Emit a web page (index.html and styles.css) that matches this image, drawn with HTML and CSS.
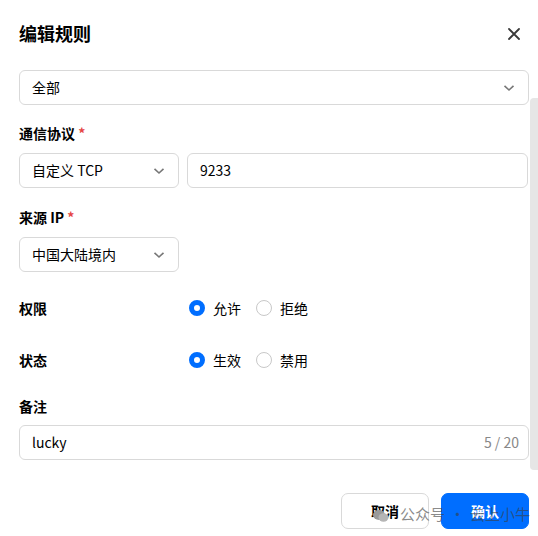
FILE: index.html
```html
<!DOCTYPE html>
<html lang="zh">
<head>
<meta charset="utf-8">
<link rel="stylesheet" href="styles.css">
</head>
<body>
<div class="modal">
  <div class="header">
    <div class="title">编辑规则</div>
    <svg class="close" width="14" height="14" viewBox="0 0 14 14"><path d="M2 2L12 12M12 2L2 12" stroke="#3a3a3a" stroke-width="1.8" stroke-linecap="round"/></svg>
  </div>
  <div class="body">
    <div class="select full first">
      <span>全部</span>
      <svg class="chev" width="12" height="8" viewBox="0 0 12 8"><path d="M1.5 1.8L6 6L10.5 1.8" fill="none" stroke="#777" stroke-width="1.6"/></svg>
    </div>

    <div class="label l-proto">通信协议 <i>*</i></div>
    <div class="row">
      <div class="select small">
        <span>自定义 TCP</span>
        <svg class="chev" width="12" height="8" viewBox="0 0 12 8"><path d="M1.5 1.8L6 6L10.5 1.8" fill="none" stroke="#777" stroke-width="1.6"/></svg>
      </div>
      <div class="input grow"><span>9233</span></div>
    </div>

    <div class="label l-ip">来源 IP <i>*</i></div>
    <div class="select small">
      <span>中国大陆境内</span>
      <svg class="chev" width="12" height="8" viewBox="0 0 12 8"><path d="M1.5 1.8L6 6L10.5 1.8" fill="none" stroke="#777" stroke-width="1.6"/></svg>
    </div>

    <div class="inline r-perm">
      <div class="label-inline">权限</div>
      <div class="radios">
        <span class="radio on"></span><span class="rtext">允许</span>
        <span class="radio"></span><span class="rtext">拒绝</span>
      </div>
    </div>

    <div class="inline r-state">
      <div class="label-inline">状态</div>
      <div class="radios">
        <span class="radio on"></span><span class="rtext">生效</span>
        <span class="radio"></span><span class="rtext">禁用</span>
      </div>
    </div>

    <div class="label l-note">备注</div>
    <div class="input full note"><span>lucky</span><span class="count">5 / 20</span></div>

    <div class="scrollbar"></div>
  </div>
  <div class="footer">
    <button class="btn cancel">取消</button>
    <button class="btn ok">确认</button>
  </div>
  <div class="watermark">
    <svg width="16" height="14" viewBox="0 0 16 14"><ellipse cx="6" cy="6" rx="6" ry="5" fill="#9a9a9a"/><ellipse cx="10.5" cy="8.5" rx="5" ry="4.2" fill="#b5b5b5"/></svg>
    <span class="wm-a">公众号</span><span class="wm-dot">·</span><span>云上小牛</span>
  </div>
</div>
</body>
</html>
```

FILE: styles.css
```css
* { box-sizing: border-box; }
html, body { margin: 0; padding: 0; background: #fff; }
body {
  font-family: "Noto Sans CJK SC", "Noto Sans", sans-serif;
  font-size: 14px;
  color: #000;
  width: 538px;
  height: 536px;
  overflow: hidden;
}
.modal { position: relative; width: 538px; height: 536px; }
.header {
  display: flex;
  justify-content: space-between;
  align-items: flex-start;
  padding: 19px 17px 0 19px;
  height: 68px;
}
.title { font-size: 18px; font-weight: 700; line-height: 28px; color: #000; }
.close { margin-top: 8px; }
.body {
  position: relative;
  padding: 2px 9px 0 19px;
  height: 416px;
}
.select, .input {
  height: 35px;
  border: 1px solid #d9d9d9;
  border-radius: 6px;
  display: flex;
  align-items: center;
  padding: 0 13px 2px 12px;
  line-height: 20px;
  color: #000;
}
.select { justify-content: space-between; }
.select .chev { margin-top: 2px; }
.select.full { width: 510px; }
.select.small { width: 160px; }
.row { display: flex; gap: 8px; }
.input.grow { width: 341px; }
.input.full { width: 510px; justify-content: space-between; padding-right: 9px; }
.count { color: #888; }
.label { font-weight: 700; line-height: 20px; }
.label i { color: #e54545; font-style: normal; font-weight: 700; }
.l-proto { margin-top: 18px; margin-bottom: 10px; }
.l-ip { margin-top: 19px; margin-bottom: 10px; }
.inline { display: flex; align-items: center; height: 20px; }
.r-perm { margin-top: 26px; }
.r-state { margin-top: 32px; }
.label-inline { width: 170px; font-weight: 700; }
.radios { display: flex; align-items: center; }
.radio {
  width: 16px; height: 16px; border-radius: 50%;
  border: 1px solid #c8c8c8;
  background: #fff;
  display: inline-block;
}
.radio.on { border: 5px solid #006eff; }
.rtext { margin-left: 8px; margin-right: 15px; }
.l-note { margin-top: 26px; margin-bottom: 9px; }
.scrollbar {
  position: absolute;
  right: 0; top: 30px;
  width: 8px; height: 372px;
  background: #e6e6e6;
  border-radius: 4px 0 0 4px;
}
.footer {
  display: flex;
  justify-content: flex-end;
  gap: 12px;
  padding: 9px 9px 0 0;
}
.btn {
  width: 88px; height: 36px;
  border-radius: 7px;
  font-family: inherit;
  font-size: 14px;
  font-weight: 700;
  cursor: pointer;
}
.cancel { background: #fff; border: 1px solid #d9d9d9; color: #000; }
.ok { background: #006eff; border: 1px solid #006eff; color: #fff; }
.watermark {
  position: absolute;
  left: 373px; top: 502px;
  display: flex; align-items: center;
  font-size: 15px;
  color: rgba(60,60,60,0.6);
  pointer-events: none;
  line-height: 24px;
}
.watermark svg { margin-top: 4px; margin-right: 11px; }
.wm-dot { margin: 0 5px; }
```
